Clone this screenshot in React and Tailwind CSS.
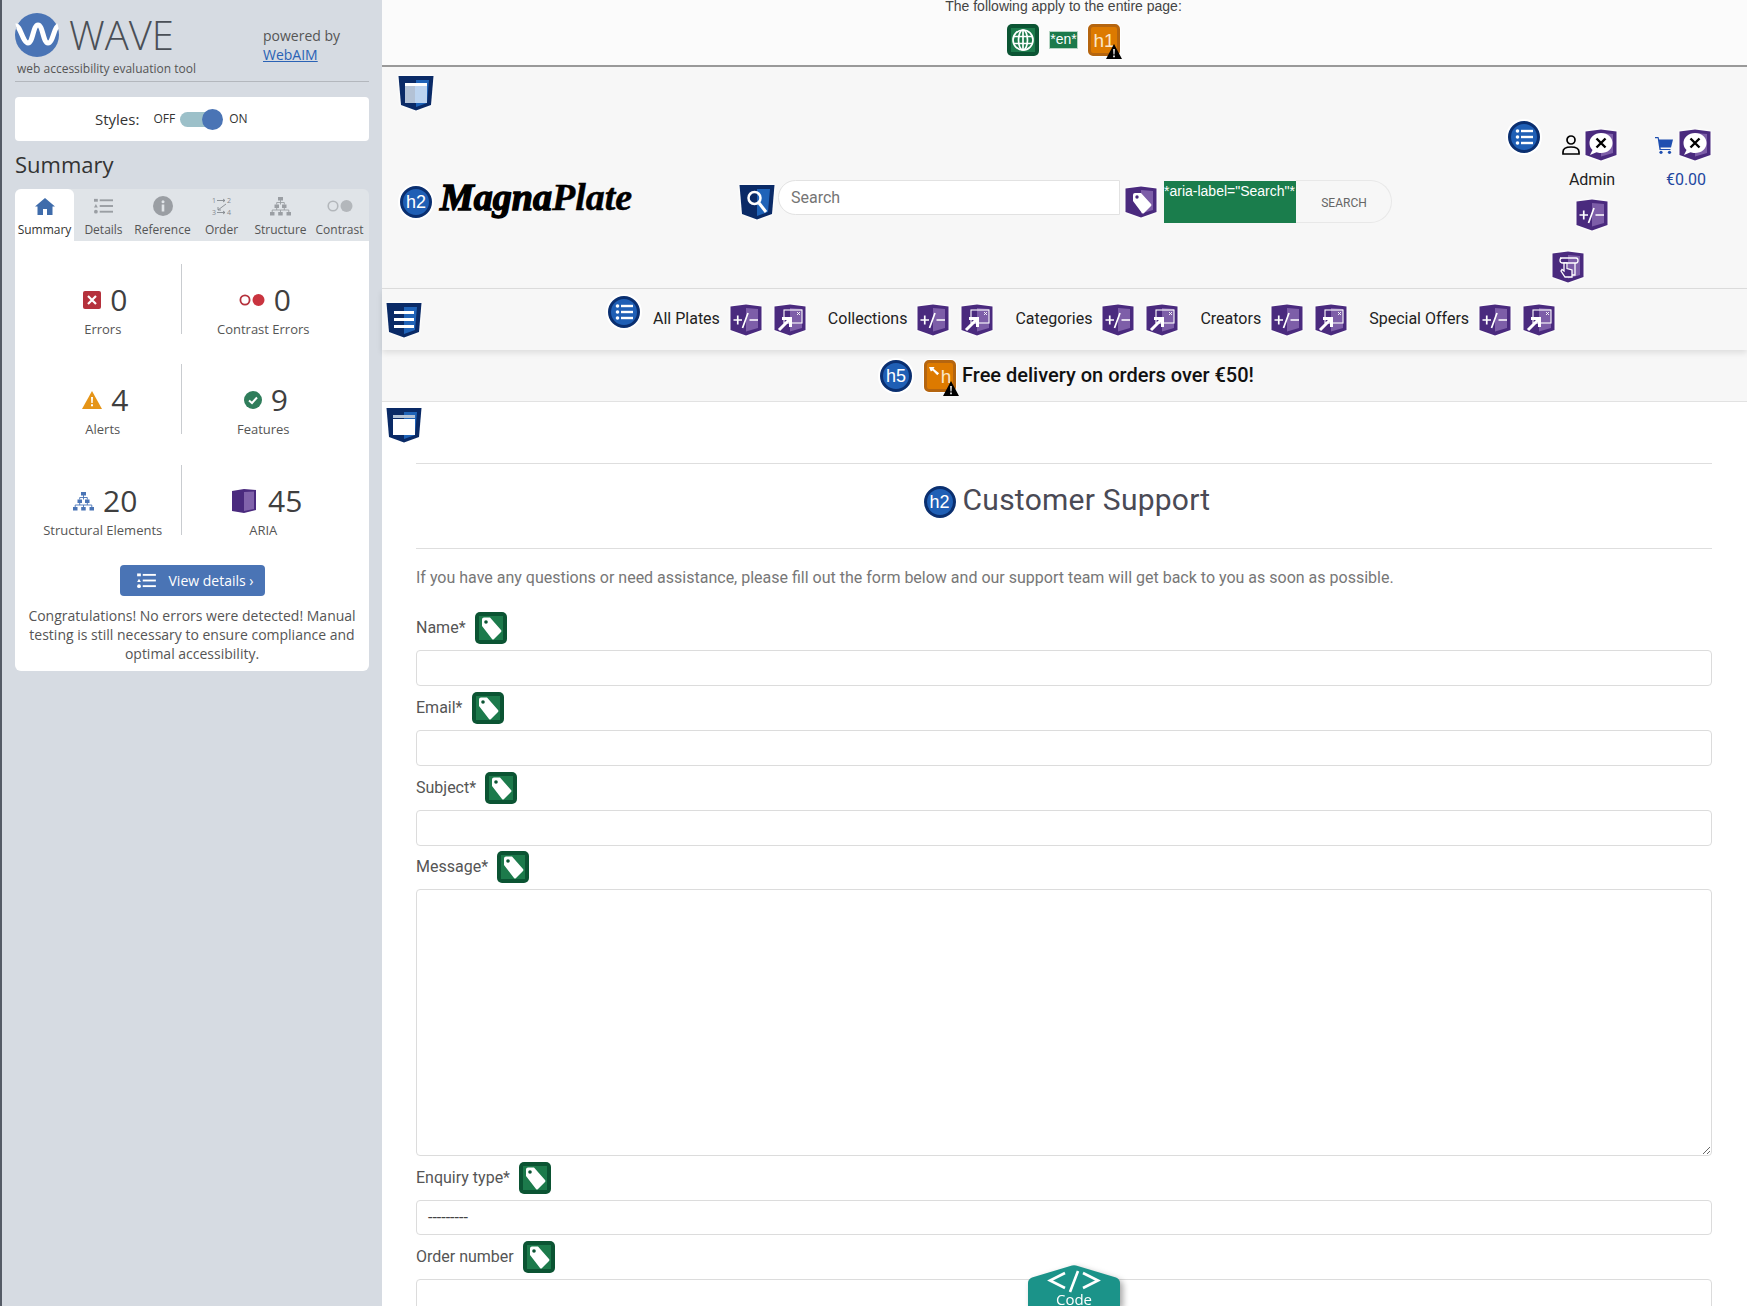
import React from "react";

const halo = "[filter:drop-shadow(0_0_1px_#fff)_drop-shadow(0_0_1px_#fff)]";

function PurpleShield({ children, className = "" }) {
  return (
    <svg viewBox="0 0 32 32" className={`w-8 h-8 shrink-0 ${halo} ${className}`}>
      <path d="M0.5 2.5 L16 0.5 L31.5 2.5 V26 L16 31.5 L0.5 26 Z" fill="#4a2a7e" />
      <path d="M16 4 L28 5 V24 L16 27.5 Z" fill="#7d5ea8" />
      {children}
    </svg>
  );
}
const PlusMinus = () => (
  <PurpleShield>
    <path d="M3.5 16 H12 M7.75 11.5 V20.5 M12.5 24 L18 9 M19.5 16 H28" stroke="#fff" strokeWidth="1.7" fill="none" />
  </PurpleShield>
);
const Expand = () => (
  <PurpleShield>
    <rect x="10" y="6" width="18" height="13" fill="none" stroke="#fff" strokeWidth="1.1" />
    <path d="M23 8 L26 11 M26 8 L23 11" stroke="#fff" strokeWidth="0.9" />
    <path d="M5 26 L15 16 M8 14.5 H16.5 V23" stroke="#fff" strokeWidth="3" fill="none" />
  </PurpleShield>
);
const BubbleX = () => (
  <PurpleShield>
    <path d="M16 4 C23 4 27.5 8.5 27.5 14 C27.5 20 22.5 24 16 24 C14 24 12.8 23.7 11.5 23.2 L5 26 L7.5 21 C5.5 19.2 4.5 17 4.5 14 C4.5 8.5 9.5 4 16 4 Z" fill="#fff" />
    <path d="M11.5 9.5 L20.5 18.5 M20.5 9.5 L11.5 18.5" stroke="#000" strokeWidth="2.4" />
  </PurpleShield>
);
const TagPurple = () => (
  <PurpleShield>
    <path d="M8 9 Q8 7 10 7 L16 7 L26 18 Q27 19 26 20 L19 27 Q18 28 17 27 L8 15 Z" fill="#fff" />
    <circle cx="12" cy="11" r="1.7" fill="#4a2a7e" />
  </PurpleShield>
);
const ClickShield = () => (
  <PurpleShield>
    <path d="M8 7 H24 Q26 7 26 9.5 Q26 12 24 12 H11 Q8 12 8 9.5 Q8 7 10 7 M23 12 V24 H18" fill="none" stroke="#fff" strokeWidth="1.3" />
    <path d="M12 12 V20 L10 18.5 L9 20 L13 26 H20 V19 L15 17.5 V12 Z" fill="#4a2a7e" stroke="#fff" strokeWidth="1.3" />
  </PurpleShield>
);

function BlueShield({ children }) {
  return (
    <svg viewBox="0 0 36 36" className={`w-9 h-9 shrink-0 ${halo}`}>
      <path d="M0.5 1 H35.5 L33 30 L18 35.5 L3 30 Z" fill="#0a2a66" />
      <path d="M18 5 H31 L29 28 L18 32 Z" fill="#1f63b8" />
      {children}
    </svg>
  );
}

function GreenTag() {
  return (
    <svg viewBox="0 0 32 32" className={`w-8 h-8 shrink-0 ${halo}`}>
      <rect x="0" y="0" width="32" height="32" rx="5" fill="#0b5433" />
      <rect x="4" y="4" width="24" height="24" fill="#1c7a4b" />
      <path d="M7 7.5 Q7 5.5 9 5.5 L15 5.5 L26 18 Q27 19 26 20 L19 27 Q18 28 17 27 L7 14 Z" fill="#fff" />
      <circle cx="11" cy="10" r="1.8" fill="#0b5433" />
    </svg>
  );
}

function Circle({ children }) {
  return (
    <div className="w-8 h-8 shrink-0 rounded-full bg-[#1f5fb5] border-[3px] border-[#0a2f70] flex items-center justify-center text-white text-[18px] leading-none font-['Liberation_Sans',sans-serif] shadow-[0_0_0_2px_#fff]">
      {children}
    </div>
  );
}
const ListCircle = () => (
  <Circle>
    <svg viewBox="0 0 20 20" className="w-[20px] h-[20px]" fill="#fff">
      <circle cx="3.5" cy="4" r="1.8" />
      <circle cx="3.5" cy="10" r="1.8" />
      <circle cx="3.5" cy="16" r="1.8" />
      <rect x="7" y="2.8" width="12" height="2.4" />
      <rect x="7" y="8.8" width="12" height="2.4" />
      <rect x="7" y="14.8" width="12" height="2.4" />
    </svg>
  </Circle>
);

const WarnTri = ({ className = "" }) => (
  <svg viewBox="0 0 16 15" className={`absolute w-4 h-[15px] ${className}`}>
    <path d="M8 0 L16 15 H0 Z" fill="#000" />
    <path d="M7.2 5 H8.8 L8.5 10.5 H7.5 Z M7.2 11.5 H8.8 V13.2 H7.2 Z" fill="#fff" />
  </svg>
);

function OrangeBox({ children }) {
  return (
    <div className="relative w-8 h-8 shrink-0 rounded-[5px] bg-[#dd7a00] border-[3px] border-[#b5650f] text-[#fbe6c8] text-[19px] leading-none flex items-center justify-center font-['Liberation_Sans',sans-serif] shadow-[0_0_0_1px_#fff]">
      {children}
    </div>
  );
}

function StructIcon({ color, className = "" }) {
  return (
    <svg viewBox="0 0 21 19" className={className} fill={color}>
      <rect x="8" y="0" width="5" height="3.5" />
      <rect x="4.5" y="7.5" width="4.5" height="3.5" />
      <rect x="12" y="7.5" width="4.5" height="3.5" />
      <rect x="0" y="15" width="4.5" height="3.5" />
      <rect x="8.2" y="15" width="4.5" height="3.5" />
      <rect x="16.5" y="15" width="4.5" height="3.5" />
      <path d="M10.5 3 V7.5 M6.7 7.5 V5.5 H14.3 V7.5 M6.7 11 V13 M2.2 15 V13 H18.8 V15 M10.5 13 V15 M14.3 11 V13" stroke={color} strokeWidth="0.9" fill="none" />
    </svg>
  );
}

function ListIcon({ color, className = "" }) {
  return (
    <svg viewBox="0 0 20 16" className={className} fill={color}>
      <rect x="0" y="0.5" width="4" height="3" />
      <path d="M2 6 L4 9.5 H0 Z" />
      <circle cx="2" cy="14" r="2" />
      <rect x="6" y="1" width="14" height="2" />
      <rect x="6" y="7" width="14" height="2" />
      <rect x="6" y="13" width="14" height="2" />
    </svg>
  );
}

const tabs = [
  {
    label: "Summary",
    active: true,
    icon: (
      <svg viewBox="0 0 20 17" className="w-[20px] h-[17px]" fill="#3f6cab">
        <path d="M10 0 L20 8.5 H17.5 V17 H12 V11 H8 V17 H2.5 V8.5 H0 Z" />
      </svg>
    ),
  },
  { label: "Details", icon: <ListIcon color="#9a9ea3" className="w-[19px] h-[16px]" /> },
  {
    label: "Reference",
    icon: (
      <svg viewBox="0 0 20 20" className="w-[20px] h-[20px]">
        <circle cx="10" cy="10" r="10" fill="#9a9ea3" />
        <rect x="8.7" y="8.5" width="2.6" height="7" fill="#e0e4e8" />
        <circle cx="10" cy="5.8" r="1.5" fill="#e0e4e8" />
      </svg>
    ),
  },
  {
    label: "Order",
    icon: (
      <svg viewBox="0 0 20 20" className="w-[20px] h-[20px]" fill="none" stroke="#85898e" strokeWidth="0.9">
        <text x="0" y="7" fontSize="7" fill="#85898e" stroke="none">1</text>
        <text x="15" y="7" fontSize="7" fill="#85898e" stroke="none">2</text>
        <text x="0" y="19" fontSize="7" fill="#85898e" stroke="none">3</text>
        <text x="15" y="19" fontSize="7" fill="#85898e" stroke="none">4</text>
        <path d="M5 4.5 H13 M11 3 L13 4.5 L11 6 M14 8 L6 14 M6 11 V14 H9 M5 16.5 H13 M11 15 L13 16.5 L11 18" />
      </svg>
    ),
  },
  { label: "Structure", icon: <StructIcon color="#9a9ea3" className="w-[21px] h-[19px]" /> },
  {
    label: "Contrast",
    icon: (
      <svg viewBox="0 0 26 12" className="w-[26px] h-[12px]">
        <circle cx="6" cy="6" r="4.8" fill="none" stroke="#b3b7bb" strokeWidth="1.6" />
        <circle cx="19.5" cy="6" r="6" fill="#b3b7bb" />
      </svg>
    ),
  },
];

function Stat({ icon, value, label, gap = "gap-[9px]", shift = "ml-[5px]" }) {
  return (
    <div className="flex flex-col items-center justify-start h-[70px]">
      <div className={`flex items-center ${gap} ${shift} h-[34px] mt-[19px]`}>
        {icon}
        <span className="text-[30px] leading-[34px] text-[#3f3f3f]">{value}</span>
      </div>
      <div className="text-[13px] leading-[17px] text-[#555] mt-[4px] whitespace-nowrap">{label}</div>
    </div>
  );
}

const stats = [
  {
    value: "0",
    label: "Errors",
    icon: (
      <svg viewBox="0 0 18 18" className="w-[18px] h-[18px]">
        <rect width="18" height="18" rx="2" fill="#b5313c" />
        <path d="M5 5 L13 13 M13 5 L5 13" stroke="#fff" strokeWidth="2.2" />
      </svg>
    ),
  },
  {
    value: "0",
    label: "Contrast Errors",
    shift: "ml-[3px]",
    icon: (
      <svg viewBox="0 0 26 12" className="w-[26px] h-[12px]">
        <circle cx="6" cy="6" r="4.6" fill="none" stroke="#b5313c" strokeWidth="1.8" />
        <circle cx="19.5" cy="6" r="6" fill="#c9343f" />
      </svg>
    ),
  },
  {
    value: "4",
    label: "Alerts",
    icon: (
      <svg viewBox="0 0 20 18" className="w-[20px] h-[18px]">
        <path d="M10 0 L20 18 H0 Z" fill="#e59417" />
        <path d="M9 6 H11 L10.7 12 H9.3 Z M9 13.3 H11 V15.3 H9 Z" fill="#fff" />
      </svg>
    ),
  },
  {
    value: "9",
    label: "Features",
    icon: (
      <svg viewBox="0 0 18 18" className="w-[18px] h-[18px]">
        <circle cx="9" cy="9" r="9" fill="#2f7d5b" />
        <path d="M5 9.5 L8 12 L13 6.5" fill="none" stroke="#fff" strokeWidth="2" />
      </svg>
    ),
  },
  {
    value: "20",
    label: "Structural Elements",
    icon: <StructIcon color="#4a74b5" className="w-[21px] h-[19px]" />,
  },
  {
    value: "45",
    label: "ARIA",
    gap: "gap-[12px]",
    shift: "ml-[8px]",
    icon: (
      <svg viewBox="0 0 24 24" className="w-[24px] h-[24px]">
        <path d="M0 2 L12 0 L24 1 V21 L12 24 L0 22 Z" fill="#4a2a7e" />
        <path d="M12 3 L22 2.5 V20 L12 22 Z" fill="#8163ab" />
      </svg>
    ),
  },
];

function statCellClass(i) {
  const side = i % 2 === 0 ? "border-r border-[#c9ccd0] pl-[10px]" : "pr-[24px]";
  return i >= 4 ? `${side} mt-[1px]` : side;
}

function Sidebar() {
  return (
    <aside className="w-[382px] shrink-0 h-full bg-[#d6dbe2] border-l-2 border-[#555b66] pl-[13px] pr-[13px] font-['Open_Sans',sans-serif] text-[#444]">
      <div className="h-[82px] border-b border-[#b3b7bd] relative flex">
        <div className="w-[248px] shrink-0 pt-[13px]">
          <div className="flex items-center h-[44px]">
            <svg viewBox="0 0 44 44" className="w-[44px] h-[44px] shrink-0">
              <circle cx="22" cy="22" r="22" fill="#4a74b5" />
              <path d="M1 13 C5 12 8 30 13 30 C18 30 18 12 23 12 C28 12 28 30 33 30 C38 30 39 14 43 13" fill="none" stroke="#fff" strokeWidth="5" />
            </svg>
            <span className="ml-[10px] text-[40px] leading-[44px] font-light text-[#4a4f56]">WAVE</span>
          </div>
          <div className="ml-[2px] mt-[3px] text-[12px] leading-[17px] text-[#555] whitespace-nowrap">web accessibility evaluation tool</div>
        </div>
        <div className="pt-[26px] text-[14px] leading-[19px] text-[#555]">
          <div>powered by</div>
          <div className="text-[#2a62b5] underline">WebAIM</div>
        </div>
      </div>
      <div className="mt-[15px] h-[44px] bg-white rounded-[4px] flex items-center pl-[80px]">
        <span className="text-[15px] text-[#333]">Styles:</span>
        <span className="ml-[14px] text-[12px] text-[#333]">OFF</span>
        <div className="relative ml-[5px] w-[38px] h-[15px] rounded-full bg-[#9cc0c9]">
          <div className="absolute right-[-5px] top-[-3px] w-[21px] h-[21px] rounded-full bg-[#4a74b5]" />
        </div>
        <span className="ml-[11px] text-[12px] text-[#333]">ON</span>
      </div>
      <h2 className="mt-[8px] text-[22px] leading-[30px] text-[#333]">Summary</h2>
      <div className="mt-[10px] h-[52px] grid grid-cols-6 bg-[#e0e4e8] rounded-t-[6px]">
        {tabs.map((t) => (
          <div key={t.label} className={`flex flex-col items-center ${t.active ? "bg-white rounded-t-[6px]" : ""}`}>
            <div className="h-[34px] flex items-center justify-center">{t.icon}</div>
            <div className={`text-[12px] leading-[14px] whitespace-nowrap ${t.active ? "text-[#333]" : "text-[#555]"}`}>{t.label}</div>
          </div>
        ))}
      </div>
      <div className="bg-white rounded-b-[6px] h-[430px] pt-[23px]">
        <div className="grid grid-cols-[166.5px_187.5px] gap-y-[30px]">
          {stats.map((s, i) => (
            <div key={s.label} className={statCellClass(i)}>
              <Stat {...s} />
            </div>
          ))}
        </div>
        <div className="mt-[30px] mx-auto w-[145px] h-[31px] rounded-[4px] bg-[#4a74b5] flex items-center text-white text-[14px] pl-[17px]">
          <ListIcon color="#fff" className="w-[19px] h-[15px]" />
          <span className="ml-[13px] whitespace-nowrap">View details ›</span>
        </div>
        <p className="mt-[10px] px-[12px] text-center text-[14px] leading-[19px] text-[#555]">
          Congratulations! No errors were detected! Manual testing is still necessary to ensure compliance and optimal accessibility.
        </p>
      </div>
    </aside>
  );
}

function NavItem({ label }) {
  return (
    <div className="flex items-start mr-[22px]">
      <span className="text-[16px] leading-[32px] text-[#222] mt-[14px] mr-[10px] whitespace-nowrap">{label}</span>
      <div className="flex gap-[12px] mt-[15px]">
        <PlusMinus />
        <Expand />
      </div>
    </div>
  );
}

function Field({ label, className = "", children }) {
  return (
    <div className={className}>
      <div className="flex items-center h-8 gap-[9px] text-[16px] text-[#555]">
        <span>{label}</span>
        <GreenTag />
      </div>
      {children}
    </div>
  );
}

const fieldCls = "block w-full mt-[6px] h-[36px] border border-[#dcdcdc] rounded-[4px] bg-white";

export default function App() {
  return (
    <div className="w-[1747px] h-[1306px] overflow-hidden flex bg-white">
      <Sidebar />
      <main className="relative flex-1 min-w-0 h-full font-[Roboto,sans-serif]">
        <div className="h-[67px] bg-[#fbfbfb] border-b-2 border-[#999] overflow-hidden flex flex-col items-center pr-[2px] font-['Liberation_Sans',sans-serif]">
          <div className="text-[14px] leading-[12px] text-[#444] whitespace-nowrap">The following apply to the entire page:</div>
          <div className="mt-[12px] flex items-center">
            <svg viewBox="0 0 32 32" className="w-8 h-8 shrink-0">
              <rect width="32" height="32" rx="5" fill="#0b5433" />
              <rect x="4" y="4" width="24" height="24" fill="#1c7a4b" />
              <g fill="none" stroke="#fff" strokeWidth="1.7">
                <circle cx="16" cy="16" r="10" />
                <ellipse cx="16" cy="16" rx="4.5" ry="10" />
                <path d="M16 6 V26 M6.5 12.5 H25.5 M6.5 19.5 H25.5" />
              </g>
            </svg>
            <div className="ml-[10px] w-[29px] h-[18px] bg-[#1c7a4b] border border-[#b7d5c4] text-white text-[14px] leading-[15px] text-center whitespace-nowrap">*en*</div>
            <div className="relative ml-[10px]">
              <OrangeBox>h1</OrangeBox>
              <WarnTri className="left-[18px] top-[20px]" />
            </div>
          </div>
        </div>

        <header className="h-[222px] bg-[#f7f7f7] border-b border-[#dedede] flex items-start">
          <div className="ml-[16px] mt-[8px] w-[341px]">
            <BlueShield>
              <rect x="7" y="8" width="22" height="3" fill="#fff" />
              <rect x="7" y="11" width="10" height="17" fill="#b3c2d6" />
              <rect x="17" y="11" width="12" height="17" fill="#bcd4f0" />
            </BlueShield>
            <div className="mt-[75px] ml-[2px] flex items-center h-8">
              <Circle>h2</Circle>
              <span className="ml-[8px] -mt-[10px] font-['Liberation_Serif',serif] font-bold italic text-[38px] leading-[40px] text-black whitespace-nowrap">
                <span className="[-webkit-text-stroke:1.4px_black]">Magna</span>
                <span className="[-webkit-text-stroke:0.5px_black]">Plate</span>
              </span>
            </div>
          </div>
          <div className="mt-[113px] flex items-start w-[653px]">
            <div className="mt-[4px] mr-[3px]">
              <BlueShield>
                <circle cx="15.5" cy="14" r="6" fill="none" stroke="#fff" strokeWidth="2.5" />
                <path d="M20 19 L27 28" stroke="#fff" strokeWidth="3" />
              </BlueShield>
            </div>
            <input readOnly placeholder="Search" className="w-[342px] h-[35px] bg-white border border-[#e2e2e2] rounded-l-[20px] pl-[12px] text-[16px] placeholder:text-[#757575] outline-none" />
            <div className="ml-[5px] mt-[6px]">
              <TagPurple />
            </div>
            <div className="ml-[7px] flex items-start">
              <div className="relative z-10 w-[132px] h-[42px] mt-[1px] bg-[#1a7d4c] text-white text-[14px] leading-[20px] font-['Liberation_Sans',sans-serif] whitespace-nowrap overflow-hidden">*aria-label="Search"*</div>
              <div className="w-[96px] h-[43px] pt-[2px] pl-[1px] border border-l-0 border-[#e8e8e8] rounded-r-[22px] flex items-center justify-center text-[12px] text-[#666]">SEARCH</div>
            </div>
          </div>
          <div className="ml-[116px] mt-[54px]"><ListCircle /></div>
          <div className="ml-[22px] mt-[62px] w-[56px] flex flex-col items-start">
            <div className="flex items-center">
              <svg viewBox="0 0 18 20" className="w-[18px] h-[20px] shrink-0" fill="none" stroke="#000" strokeWidth="1.7">
                <circle cx="9" cy="5" r="4" />
                <path d="M1 19 V17 C1 13 4 12 9 12 C14 12 17 13 17 17 V19 Z" />
              </svg>
              <div className="ml-[5px]"><BubbleX /></div>
            </div>
            <div className="w-full text-center ml-[2px] text-[16px] leading-[20px] text-[#222] mt-[9px]">Admin</div>
            <div className="ml-[14px] mt-[9px]"><PlusMinus /></div>
            <div className="-ml-[10px] mt-[20px]"><ClickShield /></div>
          </div>
          <div className="ml-[37px] mt-[62px] flex flex-col items-start">
            <div className="flex items-center">
              <svg viewBox="0 0 18 18" className="w-[18px] h-[18px] shrink-0" fill="#1f4fb0">
                <path d="M0 1 H3.5 L4.2 3.5 H18 L16 11.5 H5.5 L5.8 13 H15.5 V14 H4.5 L2.7 2.3 H0 Z" />
                <circle cx="6" cy="16.3" r="1.6" />
                <circle cx="14.5" cy="16.3" r="1.6" />
              </svg>
              <div className="ml-[6px]"><BubbleX /></div>
            </div>
            <div className="w-full text-center ml-[3px] text-[16px] leading-[20px] text-[#2347a0] mt-[9px]">€0.00</div>
          </div>
        </header>

        <nav className="h-[61px] bg-[#f7f7f7] shadow-[0_3px_6px_rgba(0,0,0,0.1)] flex items-start relative">
          <div className="ml-[4px] mt-[13px]">
            <BlueShield>
              <rect x="8" y="9" width="20" height="3" fill="#fff" />
              <rect x="8" y="16" width="20" height="3" fill="#fff" />
              <rect x="8" y="23" width="20" height="3" fill="#fff" />
            </BlueShield>
          </div>
          <div className="ml-[186px] mt-[7px] mr-[13px]"><ListCircle /></div>
          {["All Plates", "Collections", "Categories", "Creators", "Special Offers"].map((l) => (
            <NavItem key={l} label={l} />
          ))}
        </nav>

        <div className="h-[52px] bg-[#f7f7f7] border-b border-[#e2e2e2] flex items-center pl-[498px]">
          <Circle>h5</Circle>
          <div className="relative ml-[12px]">
            <OrangeBox>
              <svg viewBox="0 0 12 12" className="absolute left-[2px] top-[3px] w-[11px] h-[11px]" fill="#fff">
                <path d="M0 1 H6 L5 3 L11 8 L9 10 L4 5 L2 6 Z" />
              </svg>
              <span className="ml-[12px] mt-[2px]">h</span>
            </OrangeBox>
            <WarnTri className="left-[19px] top-[21px]" />
          </div>
          <span className="ml-[6px] mb-[2px] text-[20px] font-medium text-[#111] whitespace-nowrap">Free delivery on orders over €50!</span>
        </div>

        <div className="pl-[34px] pr-[35px]">
          <div className="-ml-[30px] mt-[5px] h-[36px]">
            <BlueShield>
              <rect x="7" y="8" width="22" height="3" fill="#b3c2d6" />
              <rect x="7" y="12" width="22" height="16" fill="#fff" />
            </BlueShield>
          </div>
          <div className="mt-[20px] h-[86px] border-y border-[#dedede] flex items-center justify-center">
            <div className="mb-[9px] ml-[6px] flex items-center gap-[7px]">
              <Circle>h2</Circle>
              <h2 className="mb-[4px] text-[30px] leading-[36px] tracking-[0.25px] text-[#4a4a55] whitespace-nowrap">Customer Support</h2>
            </div>
          </div>
          <p className="mt-[17px] text-[16px] leading-[24px] text-[#777] whitespace-nowrap">If you have any questions or need assistance, please fill out the form below and our support team will get back to you as soon as possible.</p>
          <Field label="Name*" className="mt-[22px]"><input readOnly className={fieldCls} /></Field>
          <Field label="Email*" className="mt-[6px]"><input readOnly className={fieldCls} /></Field>
          <Field label="Subject*" className="mt-[6px]"><input readOnly className={fieldCls} /></Field>
          <Field label="Message*" className="mt-[5px]">
            <textarea readOnly className="block w-full mt-[6px] h-[267px] border border-[#dcdcdc] rounded-[4px] bg-white" />
          </Field>
          <Field label="Enquiry type*" className="mt-[6px]">
            <div className="block w-full mt-[6px] h-[35px] border border-[#dcdcdc] rounded-[4px] bg-white pl-[11px] text-[16px] leading-[33px] text-[#444]">---------</div>
          </Field>
          <Field label="Order number" className="mt-[6px]"><input readOnly className={fieldCls} /></Field>
        </div>

        <div className="absolute left-[646px] bottom-0 w-[92px] h-[41px] [filter:drop-shadow(3px_3px_3px_rgba(0,0,0,0.35))]">
          <svg viewBox="0 0 92 41" className="absolute inset-0 w-[92px] h-[41px]">
            <path d="M0 18 Q0 14 4 12.5 L44 0.5 Q46 0 48 0.5 L88 12.5 Q92 14 92 18 V41 H0 Z" fill="#1b9389" />
            <path d="M37 8 L22 15.5 L37 23 M55 8 L70 15.5 L55 23 M50 6 L42 27" fill="none" stroke="#fff" strokeWidth="2.6" />
          </svg>
          <div className="absolute inset-x-0 top-[26px] text-center text-white text-[15px] leading-[16px] font-['Open_Sans',sans-serif]">Code</div>
        </div>
      </main>
    </div>
  );
}
